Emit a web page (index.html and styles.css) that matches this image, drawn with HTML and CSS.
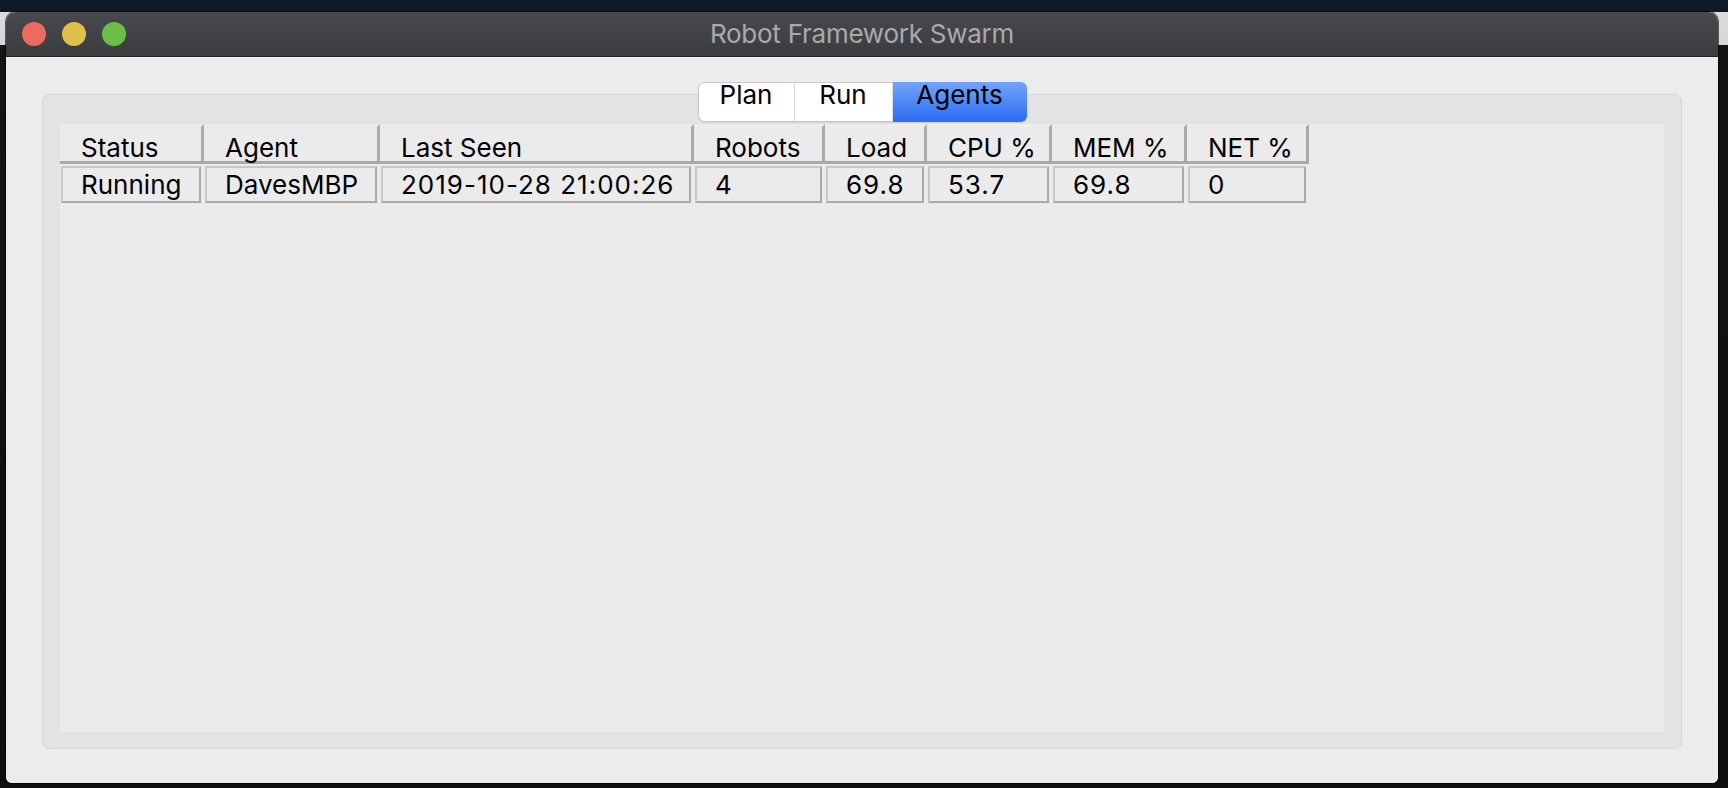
FILE: index.html
```html
<!DOCTYPE html>
<html lang="en">
<head>
<meta charset="utf-8">
<title>Robot Framework Swarm</title>
<link rel="stylesheet" href="styles.css">
</head>
<body>
<div class="desktop">
  <div class="window">
    <div class="titlebar">
      <div class="lights">
        <span class="light red"></span>
        <span class="light yellow"></span>
        <span class="light green"></span>
      </div>
      <div class="title">Robot Framework Swarm</div>
      <div class="spacer"></div>
    </div>
    <div class="content">
      <div class="tabs">
        <div class="tab tab-plan">Plan</div>
        <div class="tab tab-run">Run</div>
        <div class="tab tab-agents active">Agents</div>
      </div>
      <div class="group">
        <div class="pane">
          <div class="grid">
            <div class="th">Status</div>
            <div class="th">Agent</div>
            <div class="th">Last Seen</div>
            <div class="th">Robots</div>
            <div class="th">Load</div>
            <div class="th">CPU %</div>
            <div class="th">MEM %</div>
            <div class="th">NET %</div>
            <div class="td">Running</div>
            <div class="td">DavesMBP</div>
            <div class="td num">2019-10-28 21:00:26</div>
            <div class="td num">4</div>
            <div class="td num">69.8</div>
            <div class="td num">53.7</div>
            <div class="td num">69.8</div>
            <div class="td num">0</div>
          </div>
        </div>
      </div>
    </div>
  </div>
</div>
</body>
</html>
```

FILE: styles.css
```css
* { box-sizing: border-box; }

html, body {
  margin: 0;
  height: 788px;
  overflow: hidden;
}

body {
  background: linear-gradient(to bottom, #0f1826 0, #0f1826 12px, #dcdcdc 12px, #d6d6d6 45px, #141414 45px, #0e0e0e 100%);
  font-family: Inter, "Noto Sans", "Liberation Sans", sans-serif;
  font-size: 26px;
  color: #000;
}

.desktop {
  padding: 12px 10px 0 6px;
}

.window {
  width: 1712px;
  height: 771px;
  border-radius: 10px 10px 6px 6px;
  overflow: hidden;
  display: flex;
  flex-direction: column;
  background: #ececec;
  box-shadow: 0 0 0 1px rgba(0,0,0,0.6);
}

.titlebar {
  height: 45px;
  flex: none;
  display: grid;
  grid-template-columns: 1fr auto 1fr;
  align-items: center;
  background: linear-gradient(to bottom, #48494d, #3b3c40);
  border-bottom: 1px solid #1f2023;
}

.lights {
  display: flex;
  gap: 16px;
  padding-left: 16px;
}

.light {
  width: 24px;
  height: 24px;
  border-radius: 50%;
}
.red { background: #ec6a5e; }
.yellow { background: #e0c04b; }
.green { background: #6bbf47; }

.title {
  color: #a9aaac;
  line-height: 44px;
  text-align: center;
  letter-spacing: -0.25px;
}

.content {
  flex: 1;
  display: flex;
  flex-direction: column;
  align-items: center;
  padding: 25px 36px 34px;
  background: #ececec;
}

.tabs {
  display: flex;
  height: 40px;
  margin-bottom: -28px;
  position: relative;
  z-index: 1;
  background: #fff;
  border: 1px solid #c9c9c9;
  border-radius: 7px;
  box-shadow: 0 1px 1px rgba(0,0,0,0.08);
}

.tab {
  line-height: 24px;
  text-align: center;
  color: #000;
}
.tab-plan { width: 96px; border-right: 1px solid #dedede; }
.tab-run { width: 98px; border-right: 1px solid #dedede; }
.tab-agents { width: 133px; }

.tab.active {
  background: linear-gradient(to bottom, #72a5f8, #2a6cf3);
  border-radius: 0 6px 6px 0;
  margin: -1px -1px -1px 0;
  padding-top: 1px;
  width: 134px;
}

.group {
  align-self: stretch;
  flex: 1;
  display: flex;
  background: #e3e3e3;
  border: 1px solid #d7d7d7;
  border-radius: 7px;
  padding: 29px 17px 16px;
}

.pane {
  flex: 1;
  background: #ebebeb;
}

.grid {
  display: grid;
  grid-template-columns: 144px 176px 314px 131px 102px 125px 135px 122px;
  width: max-content;
}

.th {
  height: 40px;
  padding: 5px 0 0 21px;
  line-height: 31px;
  border-right: 3px solid #a9a9a9;
  border-bottom: 3px solid #a9a9a9;
  border-top: 3px solid #ececec;
  white-space: nowrap;
}

.td {
  height: 37px;
  margin: 2px 3px 0 1px;
  padding: 0 0 0 18px;
  line-height: 33px;
  border: 2px solid;
  border-color: #c8c8c8 #a9a9a9 #a9a9a9 #c8c8c8;
  white-space: nowrap;
}

.td.num {
  letter-spacing: 1px;
}
```
